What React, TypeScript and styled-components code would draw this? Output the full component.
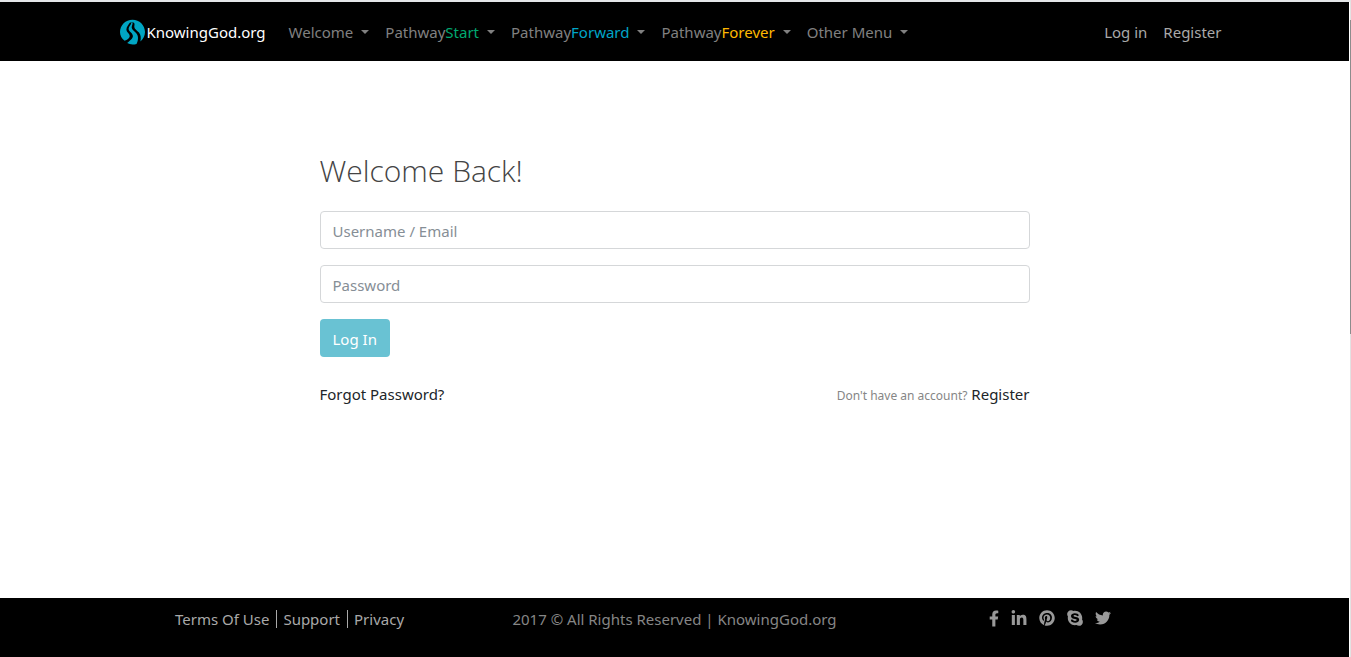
import React from "react";
import styled, { createGlobalStyle } from "styled-components";
import { FaFacebookF, FaLinkedinIn, FaPinterest, FaSkype, FaTwitter } from "react-icons/fa";

const GlobalStyle = createGlobalStyle`
  *, *::before, *::after { box-sizing: border-box; }
  body {
    margin: 0;
    background: #fff;
    color: #212529;
    font-family: "Noto Sans", "Open Sans", sans-serif;
    font-size: 15px;
    line-height: 24px;
  }
  a { color: inherit; text-decoration: none; }
`;

const Page = styled.div`
  display: flex;
  flex-direction: column;
  min-height: 100vh;
  padding-right: 2px;
  border-top: 2px solid #e4e6e8;
`;

const ScrollTrack = styled.div`
  position: absolute;
  top: 0;
  right: 0;
  width: 1px;
  height: 100%;
  padding-top: 20px;
  background: #e2e2e2;
`;

const ScrollThumb = styled.div`
  height: 50%;
  max-height: 314px;
  background: #8c8c8c;
`;

const Header = styled.header`
  background: #000;
`;

const Navbar = styled.nav`
  display: flex;
  align-items: center;
  max-width: 1140px;
  min-height: 59px;
  margin: 0 auto;
  padding: 1px 15px 0;
`;

const Brand = styled.a`
  display: flex;
  align-items: center;
  gap: 2px;
  margin-right: 15px;
  color: #fff;
`;

const NavList = styled.ul<{ $end?: boolean }>`
  display: flex;
  list-style: none;
  margin: 0 0 0 ${(p) => (p.$end ? "auto" : "0")};
  padding: 0;
`;

const NavLink = styled.a<{ $bright?: boolean }>`
  display: flex;
  align-items: center;
  padding: 0 8px;
  color: ${(p) => (p.$bright ? "#a9a9a9" : "#808080")};
`;

const Accent = styled.span<{ $color: string }>`
  color: ${(p) => p.$color};
`;

const Caret = styled.span`
  margin-left: 8px;
  border: 4px solid transparent;
  border-top-color: currentColor;
  border-bottom: 0;
`;

const Main = styled.main`
  flex: 1;
  width: 100%;
  max-width: 740px;
  margin: 0 auto;
  padding: 90px 15px 40px;
`;

const Title = styled.h1`
  margin: 0 0 20px;
  color: #444;
  font-family: "Open Sans", "Noto Sans", sans-serif;
  font-size: 30px;
  font-weight: 300;
  line-height: 40px;
`;

const Form = styled.form`
  display: flex;
  flex-direction: column;
  align-items: flex-start;
  gap: 16px;
`;

const TextInput = styled.input`
  width: 100%;
  height: 38px;
  padding: 2px 12px 0;
  border: 1px solid #d5d7d9;
  border-radius: 4px;
  background: #fff;
  color: #495057;
  font: inherit;
  &::placeholder { color: #868e96; opacity: 1; }
`;

const SubmitButton = styled.button`
  height: 38px;
  padding: 2px 13px 0;
  border: 0;
  border-radius: 4px;
  background: #69c2d3;
  color: #fff;
  font: inherit;
`;

const FormLinks = styled.div`
  display: flex;
  justify-content: space-between;
  align-items: baseline;
  margin-top: 25px;
`;

const Hint = styled.span`
  color: #868686;
  font-size: 12px;
`;

const Footer = styled.footer`
  min-height: 59px;
  background: #000;
  color: #868686;
`;

const FooterRow = styled.div`
  display: grid;
  grid-template-columns: repeat(3, 1fr);
  max-width: 1140px;
  margin: 0 auto;
  padding-top: 9px;
`;

const FooterLinks = styled.div`
  display: flex;
  justify-content: center;
  align-items: center;
  padding-right: 10px;
  color: #a9a9a9;
`;

const FooterLink = styled.a`
  line-height: 18px;
  & + & {
    margin-left: 7px;
    padding-left: 6px;
    border-left: 1px solid #a9a9a9;
  }
`;

const Copyright = styled.div`
  text-align: center;
`;

const Social = styled.div`
  display: flex;
  justify-content: center;
  align-items: center;
  gap: 12px;
  padding: 0 9px 2px 0;
  color: #999;
  a { display: flex; }
`;

const menus = [
  { label: "Welcome" },
  { label: "Pathway", accent: "Start", color: "#00a870" },
  { label: "Pathway", accent: "Forward", color: "#00a5c8" },
  { label: "Pathway", accent: "Forever", color: "#ffb900" },
  { label: "Other Menu" },
];

const socials = [
  { name: "Facebook", Icon: FaFacebookF, width: 10, height: 17 },
  { name: "LinkedIn", Icon: FaLinkedinIn, width: 16, height: 17 },
  { name: "Pinterest", Icon: FaPinterest, width: 16, height: 16 },
  { name: "Skype", Icon: FaSkype, width: 16, height: 18 },
  { name: "Twitter", Icon: FaTwitter, width: 16, height: 16 },
];

function LogoMark() {
  return (
    <svg width="25" height="26" viewBox="0 0 25 26" aria-hidden="true">
      <g fill="#00a5c3">
        <path d="M4.6 21.8C1.8 19.8 0 16.7 0 13.1 0 6.2 5.6.7 12.5.7S25 6.2 25 13.1c0 3.8-1.8 7.2-4.6 9.5.7-3.6.5-6.5-1.4-9-1.8-2.3-4.6-3.6-4.7-5.7 0-1.6.7-2.8-.3-4.1-1-.9-3.3-.8-4.2 0C8.900 5.300 6.400 7.700 6.400 10.600c0 3 3.700 4.300 3.300 6.800-.3 1.900-2.500 3.300-5.100 4.400Z" />
        <path d="M11.300 3.500c.2 2-2.600 3.900-2.700 6.300-.1 2.800 4.300 4.200 4.300 7.200 0 2.900-3.500 4.800-5.700 7.100 2.500 1.500 6 1.900 9.300.8 1.700-3.200 2.200-7.300.3-10-1.600-2.300-4.900-3.900-5.100-6.300-.1-2 1.500-3.600.7-5.100Z" />
      </g>
    </svg>
  );
}

export default function App() {
  return (
    <Page>
      <GlobalStyle />
      <Header>
        <Navbar>
          <Brand href="#">
            <LogoMark />
            KnowingGod.org
          </Brand>
          <NavList>
            {menus.map((m) => (
              <li key={m.label + (m.accent ?? "")}>
                <NavLink href="#">
                  {m.label}
                  {m.accent && <Accent $color={m.color}>{m.accent}</Accent>}
                  <Caret />
                </NavLink>
              </li>
            ))}
          </NavList>
          <NavList $end>
            <li><NavLink $bright href="#">Log in</NavLink></li>
            <li><NavLink $bright href="#">Register</NavLink></li>
          </NavList>
        </Navbar>
      </Header>
      <Main>
        <Title>Welcome Back!</Title>
        <Form onSubmit={(e) => e.preventDefault()}>
          <TextInput type="text" placeholder="Username / Email" aria-label="Username / Email" />
          <TextInput type="password" placeholder="Password" aria-label="Password" />
          <SubmitButton type="submit">Log In</SubmitButton>
        </Form>
        <FormLinks>
          <a href="#">Forgot Password?</a>
          <span>
            <Hint>Don't have an account?</Hint> <a href="#">Register</a>
          </span>
        </FormLinks>
      </Main>
      <Footer>
        <FooterRow>
          <FooterLinks>
            <FooterLink href="#">Terms Of Use</FooterLink>
            <FooterLink href="#">Support</FooterLink>
            <FooterLink href="#">Privacy</FooterLink>
          </FooterLinks>
          <Copyright>2017 © All Rights Reserved | KnowingGod.org</Copyright>
          <Social>
            {socials.map(({ name, Icon, width, height }) => (
              <a href="#" aria-label={name} key={name}>
                <Icon style={{ width, height }} />
              </a>
            ))}
          </Social>
        </FooterRow>
      </Footer>
      <ScrollTrack>
        <ScrollThumb />
      </ScrollTrack>
    </Page>
  );
}
